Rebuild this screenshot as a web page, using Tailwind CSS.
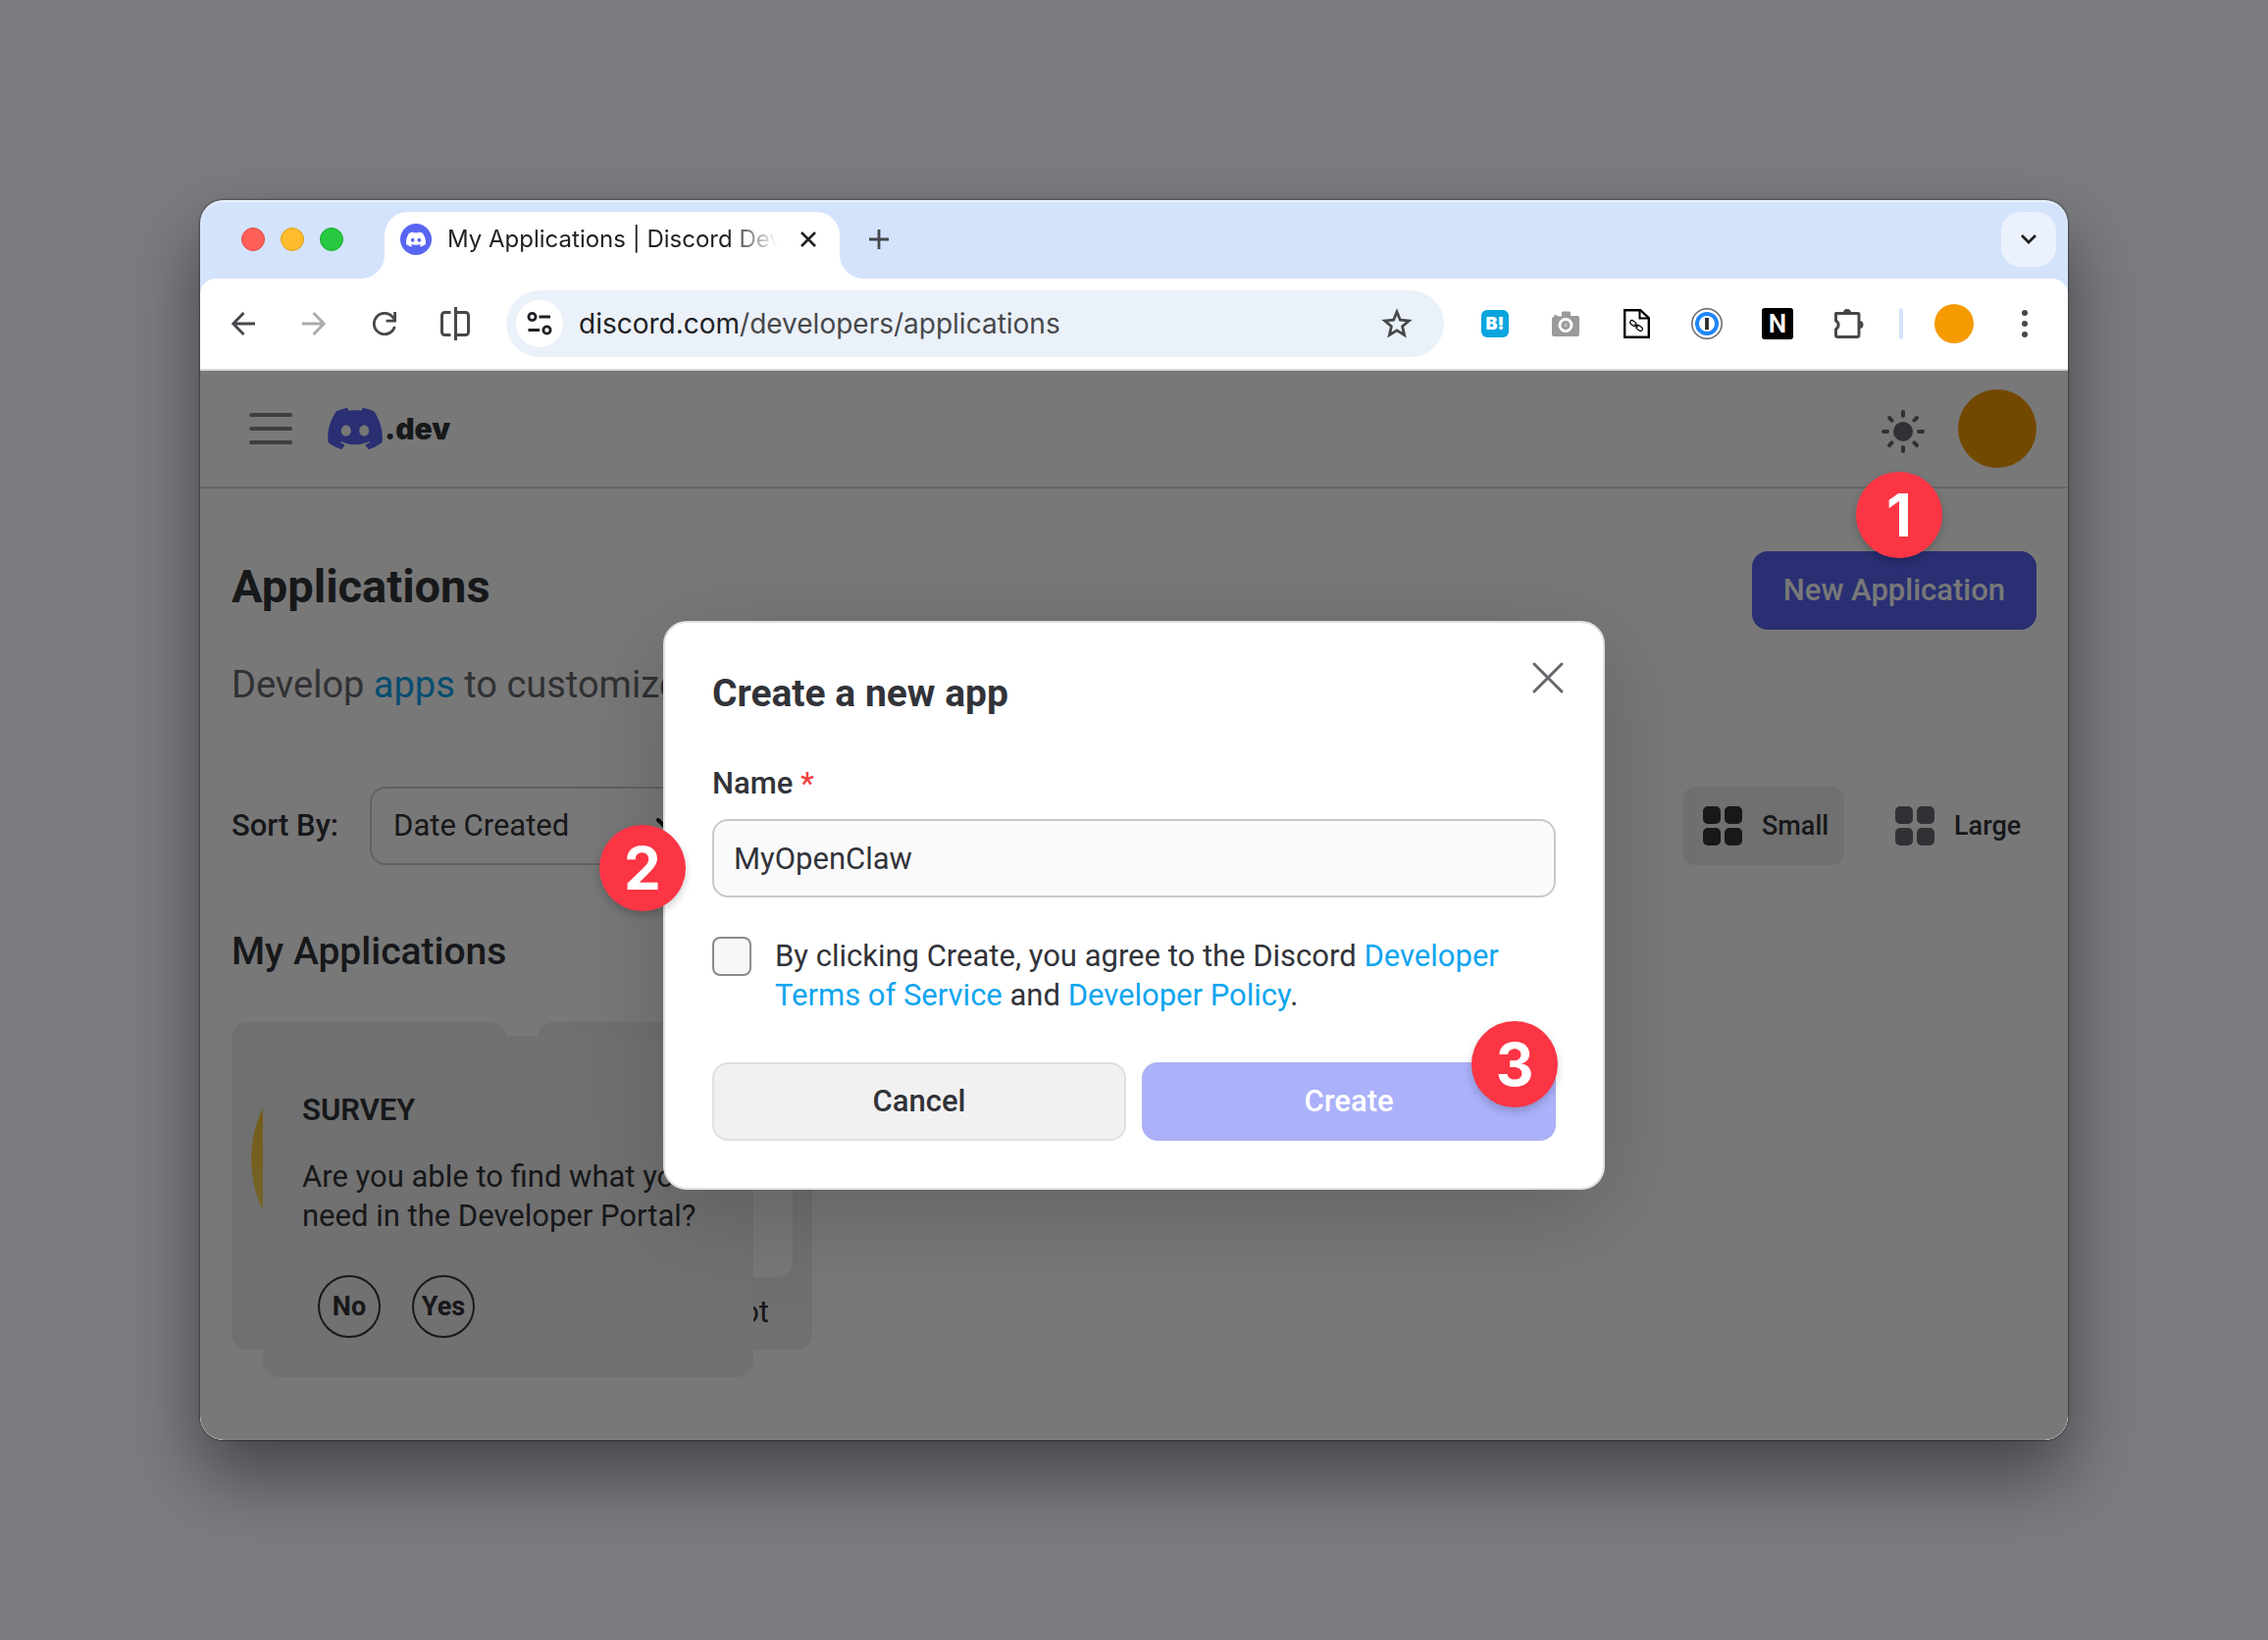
<!DOCTYPE html>
<html lang="en">
<head>
  <meta charset="UTF-8" />
  <title>My Applications | Discord Developer Portal</title>
  <meta name="viewport" content="width=device-width, initial-scale=1" />
  <script src="https://cdn.jsdelivr.net/npm/@tailwindcss/browser@4"></script>
</head>
<body class="min-h-screen bg-[#7b7c80] p-[204px] flex font-['Roboto','Noto_Sans',sans-serif] text-[31px] leading-[40px] text-[#323339]">

  <!-- Browser window -->
  <div class="relative flex-1 flex flex-col rounded-[24px] bg-[#d4e3fc] shadow-[0_0_2px_1px_rgba(0,0,0,0.35),0_36px_72px_rgba(0,0,0,0.45)]">

    <!-- Tab strip -->
    <div class="h-20 shrink-0 flex items-center pl-[42px] pr-3 font-['Inter',sans-serif] shadow-[inset_0_2px_1px_rgba(255,255,255,0.5)] rounded-t-[24px]">
      <div class="flex gap-4">
        <span class="size-6 rounded-full bg-[#ff5f57] border border-[#e2463f]"></span>
        <span class="size-6 rounded-full bg-[#febc2e] border border-[#e1a116]"></span>
        <span class="size-6 rounded-full bg-[#28c840] border border-[#12ac28]"></span>
      </div>

      <div class="relative self-end ml-[42px] w-[464px] h-[68px] flex items-center rounded-t-[24px] bg-white pl-4 pr-5 pb-3">
        <svg class="absolute -left-6 bottom-0 size-6" viewBox="0 0 24 24" fill="#fff"><path d="M24 0v24H0A24 24 0 0 0 24 0z" /></svg>
        <svg class="absolute -right-6 bottom-0 size-6" viewBox="0 0 24 24" fill="#fff"><path d="M0 0v24h24A24 24 0 0 1 0 0z" /></svg>
        <span class="size-8 shrink-0 rounded-full bg-[#5865f2] flex items-center justify-center">
          <svg class="w-5 h-4" viewBox="0 2.5 24 19" fill="#fff"><use href="#clyde" /></svg>
        </span>
        <span class="ml-4 w-[336px] overflow-hidden whitespace-nowrap text-[24px] leading-8 text-[#1f2023] mask-r-from-85% mask-r-to-100%">My Applications | Discord Developer Portal</span>
        <button type="button" aria-label="Close tab" class="ml-auto size-6 shrink-0 flex items-center justify-center">
          <svg class="size-4" viewBox="0 0 16 16" fill="none" stroke="#1f2023" stroke-width="2.6"><path d="M1 1l14 14M15 1L1 15" /></svg>
        </button>
      </div>

      <button type="button" aria-label="New tab" class="ml-7 size-6 flex items-center justify-center">
        <svg class="size-5" viewBox="0 0 20 20" fill="none" stroke="#44474b" stroke-width="2.8"><path d="M10 0v20M0 10h20" /></svg>
      </button>

      <button type="button" aria-label="Search tabs" class="ml-auto size-14 rounded-[20px] bg-[#ecf2fd] flex items-center justify-center">
        <svg class="w-4 h-[10px]" viewBox="0 0 16 10" fill="none" stroke="#1f2023" stroke-width="2.8"><path d="M1 1l7 7 7-7" /></svg>
      </button>
    </div>

    <!-- Toolbar -->
    <div class="h-[94px] shrink-0 flex items-center px-4 rounded-t-2xl bg-white border-b-2 border-[#d6d6d6]">
      <div class="flex gap-4">
        <button type="button" aria-label="Back" class="size-14 flex items-center justify-center">
          <svg class="size-6" viewBox="0 0 24 24" fill="none" stroke="#46484b" stroke-width="2.8"><path d="M24 12H2M12.500 1L1.800 12l10.700 11" /></svg>
        </button>
        <button type="button" aria-label="Forward" class="size-14 flex items-center justify-center">
          <svg class="size-6" viewBox="0 0 24 24" fill="none" stroke="#ababab" stroke-width="2.8"><path d="M0 12h22M11.500 1l10.700 11-10.700 11" /></svg>
        </button>
        <button type="button" aria-label="Reload" class="size-14 flex items-center justify-center">
          <svg class="size-6" viewBox="0 0 24 24" fill="none" stroke="#46484b" stroke-width="2.8"><path d="M22.300 15A10.700 10.700 0 1 1 20.500 5.500L22.500 8" /><path d="M22.600 0v9.200h-9" /></svg>
        </button>
        <button type="button" aria-label="Split view" class="size-14 flex items-center justify-center">
          <svg class="w-[30px] h-[34px]" viewBox="0 0 30 34" fill="none" stroke="#46484b" stroke-width="3"><path d="M10.500 5.500h-6a3 3 0 0 0-3 3v17a3 3 0 0 0 3 3h6M15.500 5.500h10a3 3 0 0 1 3 3v17a3 3 0 0 1-3 3h-10zM15.500 0v34" /></svg>
        </button>
      </div>

      <div class="ml-6 flex-1 h-[68px] flex items-center rounded-full bg-[#ebf1f9] pl-[10px] pr-8 font-['Inter',sans-serif]">
        <button type="button" aria-label="Site information" class="size-12 shrink-0 rounded-full bg-white flex items-center justify-center">
          <svg class="w-[26px] h-6" viewBox="0 0 26 24" fill="none" stroke="#1f2023" stroke-width="2.8"><circle cx="5.5" cy="5" r="3.6" /><path d="M12.500 5H24M1.500 18.500H13" /><circle cx="20.5" cy="18.5" r="3.6" /></svg>
        </button>
        <span class="ml-4 flex-1 text-[28px] text-[#46484b]"><span class="text-[#1f2023]">discord.com</span>/developers/applications</span>
        <button type="button" aria-label="Bookmark" class="size-8 flex items-center justify-center">
          <svg class="size-8" viewBox="0 0 32 32" fill="none" stroke="#46484b" stroke-width="2.8"><path d="M16 4l3.400 8.200 8.900.8-6.700 5.800 2 8.700-7.600-4.600-7.600 4.600 2-8.700L3.700 13l8.900-.8z" /></svg>
        </button>
      </div>

      <div class="ml-6 flex gap-4">
        <button type="button" aria-label="Hatena Bookmark" class="size-14 flex items-center justify-center">
          <span class="size-7 rounded-md bg-[#0ba5de] text-white text-[18px] leading-7 font-black font-['Inter',sans-serif]">B!</span>
        </button>
        <button type="button" aria-label="Capture" class="size-14 flex items-center justify-center">
          <svg class="size-7" viewBox="0 0 28 28"><path fill="#9a9a9a" d="M10 3q0-1.500 1.500-1.500h6q1.500 0 1.500 1.500v3h7q2 0 2 2v17q0 2-2 2H2q-2 0-2-2V9q0-2 2-2 0-2 1.800-2T6 6.500h4z" /><circle cx="14" cy="15.5" r="6" fill="#9a9a9a" stroke="#fff" stroke-width="3" /><circle cx="14" cy="15.5" r="2" fill="#bbb" /></svg>
        </button>
        <button type="button" aria-label="Copy link" class="size-14 flex items-center justify-center">
          <svg class="w-[27px] h-[30px]" viewBox="0 0 27 30" fill="none" stroke="#000"><path stroke-width="2.4" d="M1.200 1.200h16l8.600 8v19.600H1.200z" /><path stroke-width="2" d="M16.500 2v7.500H25" /><g stroke-width="1.2" transform="rotate(38 13 17)"><rect x="5.500" y="15" width="7" height="4" rx="2" /><rect x="13.500" y="15" width="7" height="4" rx="2" /><path d="M10.500 17h5" /></g></svg>
        </button>
        <button type="button" aria-label="1Password" class="size-14 flex items-center justify-center">
          <svg class="size-8" viewBox="0 0 32 32" fill="none"><circle cx="16" cy="16" r="15.2" stroke="#666" stroke-width="1.5" /><circle cx="16" cy="16" r="10" stroke="#1f86f7" stroke-width="4" /><path d="M16 10v12" stroke="#2b2b2b" stroke-width="3.8" /></svg>
        </button>
        <button type="button" aria-label="Notion" class="size-14 flex items-center justify-center">
          <span class="size-8 rounded-[3px] bg-black text-white text-[26px] leading-8 font-semibold">N</span>
        </button>
        <button type="button" aria-label="Extensions" class="size-14 flex items-center justify-center">
          <svg class="size-8" viewBox="0 0 32 32"><path fill="none" stroke="#46484b" stroke-width="3" stroke-linejoin="round" d="M3.500 5.500H26a1 1 0 0 1 1 1V28a1.500 1.500 0 0 1-1.500 1.500H5A1.500 1.500 0 0 1 3.500 28v-6.500a4.800 4.800 0 0 0 0-8.500V5.500z" /><path fill="#46484b" d="M11 5a4 4 0 0 1 8 0zM27.500 13a4 4 0 0 1 0 8z" /></svg>
        </button>
      </div>
      <span class="ml-6 w-1 h-8 rounded-full bg-[#d4e3fc]"></span>
      <button type="button" aria-label="Profile" class="ml-8 size-10 rounded-full bg-[#f59a00]"></button>
      <button type="button" aria-label="Browser menu" class="ml-6 size-14 flex items-center justify-center">
        <svg class="w-[6px] h-7" viewBox="0 0 6 28" fill="#46484b"><circle cx="3" cy="3" r="3" /><circle cx="3" cy="14" r="3" /><circle cx="3" cy="25" r="3" /></svg>
      </button>
    </div>

    <!-- Web page -->
    <div class="relative flex-1 flex flex-col overflow-hidden rounded-b-[24px] bg-white">
      <header class="h-[120px] shrink-0 flex items-center px-8 border-b-2 border-[#d9d9d9]">
        <button type="button" aria-label="Menu" class="w-20 h-20 flex items-center justify-center">
          <svg class="w-11 h-8" viewBox="0 0 44 32" stroke="#85868d" stroke-width="4" stroke-linecap="round"><path d="M2 2h40M2 16h40M2 30h40" /></svg>
        </button>
        <a href="#" class="ml-[18px] flex items-center gap-[2px] font-['Inter',sans-serif] font-black text-[30px] text-[#323339]">
          <svg class="w-14 h-11" viewBox="0 2.5 24 19" fill="#5865f2"><path id="clyde" d="M20.317 4.3698a19.7913 19.7913 0 00-4.8851-1.5152.0741.0741 0 00-.0785.0371c-.211.3753-.4447.8648-.6083 1.2495-1.8447-.2762-3.68-.2762-5.4868 0-.1636-.3933-.4058-.8742-.6177-1.2495a.077.077 0 00-.0785-.037 19.7363 19.7363 0 00-4.8852 1.515.0699.0699 0 00-.0321.0277C.5334 9.0458-.319 13.5799.0992 18.0578a.0824.0824 0 00.0312.0561c2.0528 1.5076 4.0413 2.4228 5.9929 3.0294a.0777.0777 0 00.0842-.0276c.4616-.6304.8731-1.2952 1.226-1.9942a.076.076 0 00-.0416-.1057c-.6528-.2476-1.2743-.5495-1.8722-.8923a.077.077 0 01-.0076-.1277c.1258-.0943.2517-.1923.3718-.2914a.0743.0743 0 01.0776-.0105c3.9278 1.7933 8.18 1.7933 12.0614 0a.0739.0739 0 01.0785.0095c.1202.099.246.1981.3728.2924a.077.077 0 01-.0066.1276 12.2986 12.2986 0 01-1.873.8914.0766.0766 0 00-.0407.1067c.3604.698.7719 1.3628 1.225 1.9932a.076.076 0 00.0842.0286c1.961-.6067 3.9495-1.5219 6.0023-3.0294a.077.077 0 00.0313-.0552c.5004-5.177-.8382-9.6739-3.5485-13.6604a.061.061 0 00-.0312-.0286zM8.02 15.3312c-1.1825 0-2.1569-1.0857-2.1569-2.419 0-1.3332.9555-2.4189 2.157-2.4189 1.2108 0 2.1757 1.0952 2.1568 2.419 0 1.3332-.9555 2.4189-2.1569 2.4189zm7.9748 0c-1.1825 0-2.1569-1.0857-2.1569-2.419 0-1.3332.9554-2.4189 2.1569-2.4189 1.2108 0 2.1757 1.0952 2.1568 2.419 0 1.3332-.946 2.4189-2.1568 2.4189Z" /></svg>
          <span>.dev</span>
        </a>
        <div class="ml-auto flex items-center gap-8">
          <button type="button" aria-label="Toggle theme" class="size-12 pt-[6px] flex items-center justify-center">
            <svg class="size-11 shrink-0" viewBox="0 0 44 44" stroke="#66686f" stroke-width="4" stroke-linecap="round"><circle cx="22" cy="22" r="10" fill="#66686f" stroke="none" /><path d="M22 2v4M22 38v4M2 22h4M38 22h4M8 8l2.600 2.600M33.400 33.400L36 36M8 36l2.600-2.600M33.400 10.600L36 8" /></svg>
          </button>
          <button type="button" aria-label="Account" class="size-20 rounded-full bg-[#f59a00]"></button>
        </div>
      </header>

      <main class="px-8 pt-16">
        <div class="flex justify-between items-start">
          <h1 class="text-[47px] leading-[72px] font-bold">Applications</h1>
          <button type="button" class="h-20 px-8 rounded-2xl bg-[#5865f2] text-white font-medium">New Application</button>
        </div>
        <p class="mt-8 text-[38px] leading-[48px] text-[#66686f]">Develop <a href="#" class="text-[#0ea5ef]">apps</a> to customize</p>

        <div class="mt-20 flex items-center">
          <label for="sort" class="font-medium">Sort By:</label>
          <div class="relative ml-8">
            <select id="sort" class="w-[348px] h-20 appearance-none rounded-2xl border-2 border-[#cfcfcf] px-[22px]">
              <option>Date Created</option>
            </select>
            <svg class="absolute right-8 top-8 w-6 h-4" viewBox="0 0 24 16" fill="none" stroke="#1f2023" stroke-width="4" stroke-linecap="round" stroke-linejoin="round"><path d="M2 2l10 10L22 2" /></svg>
          </div>
          <div class="ml-auto flex gap-8 text-[27px] font-medium">
            <button type="button" class="h-20 w-[164px] flex items-center gap-5 pl-5 rounded-xl bg-[#efefef]">
              <svg class="size-10 shrink-0" viewBox="0 0 40 40" fill="#323339"><rect width="18" height="18" rx="5" /><rect x="22" width="18" height="18" rx="5" /><rect y="22" width="18" height="18" rx="5" /><rect x="22" y="22" width="18" height="18" rx="5" /></svg>
              Small
            </button>
            <button type="button" class="h-20 w-[164px] flex items-center gap-5 pl-5 rounded-xl">
              <svg class="size-10 shrink-0" viewBox="0 0 40 40" fill="#66686f"><rect width="18" height="18" rx="5" /><rect x="22" width="18" height="18" rx="5" /><rect y="22" width="18" height="18" rx="5" /><rect x="22" y="22" width="18" height="18" rx="5" /></svg>
              Large
            </button>
          </div>
        </div>

        <h2 class="mt-16 text-[39px] leading-[48px] font-medium">My Applications</h2>
        <div class="mt-12 flex gap-8">
          <a href="#" class="w-[280px] h-[334px] p-5 rounded-2xl bg-[#efefef]">
            <span class="block size-60 rounded-full bg-linear-to-b from-[#f2b90f] to-[#ffdf6b]"></span>
          </a>
          <a href="#" class="w-[280px] h-[334px] p-5 rounded-2xl bg-[#efefef]">
            <span class="block size-60 rounded-2xl bg-white"></span>
            <span class="block mt-4 pr-6 text-right">ot</span>
          </a>
        </div>
      </main>

      <!-- Survey popup -->
      <section class="absolute left-16 bottom-16 w-[500px] px-10 pt-14 pb-10 rounded-2xl bg-[#f0f0f0]">
        <h3 class="font-semibold">SURVEY</h3>
        <p class="mt-7">Are you able to find what you need in the Developer Portal?</p>
        <div class="mt-10 ml-4 flex gap-8 text-[27px] font-bold">
          <button type="button" class="size-16 rounded-full border-2 border-[#323339]">No</button>
          <button type="button" class="size-16 rounded-full border-2 border-[#323339]">Yes</button>
        </div>
      </section>

      <!-- Backdrop and dialog -->
      <div class="absolute inset-0 flex items-center justify-center rounded-b-[24px] bg-black/53 shadow-[inset_0_-1px_1px_rgba(255,255,255,0.12)]">
        <span class="absolute top-[103px] right-32 size-22 rounded-full bg-[#fc3545] shadow-[0_4px_8px_rgba(0,0,0,0.2)] text-white text-center text-[60px] leading-[88px] font-bold font-['Inter',sans-serif]">1</span>

        <div role="dialog" aria-labelledby="dialog-title" class="relative w-[960px] p-12 rounded-[24px] border-2 border-[#e0e0e0] bg-white shadow-[0_24px_96px_rgba(0,0,0,0.18)]">
          <button type="button" aria-label="Close" class="absolute top-8 right-8 size-12 flex items-center justify-center">
            <svg class="size-8" viewBox="0 0 32 32" fill="none" stroke="#66676c" stroke-width="3" stroke-linecap="round"><path d="M2 2l28 28M30 2L2 30" /></svg>
          </button>
          <h2 id="dialog-title" class="text-[39px] leading-[48px] font-bold">Create a new app</h2>

          <form>
            <label for="app-name" class="block mt-12 font-medium">Name <span class="text-[#f23f43]">*</span></label>
            <div class="relative mt-4">
              <input id="app-name" type="text" value="MyOpenClaw" class="block w-full h-20 px-5 rounded-2xl border-2 border-[#c8c8c8] bg-[#fafafa]" />
              <span class="absolute top-[6px] -left-[115px] size-22 rounded-full bg-[#fc3545] shadow-[0_4px_8px_rgba(0,0,0,0.2)] text-white text-center text-[60px] leading-[88px] font-bold font-['Inter',sans-serif]">2</span>
            </div>

            <div class="mt-10 flex gap-6">
              <input id="agree" type="checkbox" class="size-10 shrink-0 appearance-none rounded-lg border-2 border-[#8a8b90] bg-[#f6f6f6]" />
              <label for="agree">By clicking Create, you agree to the Discord <a href="#" class="text-[#0ea5ef]">Developer Terms of Service</a> and <a href="#" class="text-[#0ea5ef]">Developer Policy</a>.</label>
            </div>

            <div class="mt-12 grid grid-cols-2 gap-4">
              <button type="button" class="h-20 rounded-2xl border-2 border-[#e0e0e0] bg-[#f1f1f1] font-medium">Cancel</button>
              <div class="relative">
                <button type="submit" class="w-full h-20 rounded-2xl border-2 border-[#adb0f2] bg-[#abb1fa] text-white font-medium">Create</button>
                <span class="absolute -top-[42px] -right-[2px] size-22 rounded-full bg-[#fc3545] shadow-[0_4px_8px_rgba(0,0,0,0.2)] text-white text-center text-[60px] leading-[88px] font-bold font-['Inter',sans-serif]">3</span>
              </div>
            </div>
          </form>
        </div>
      </div>
    </div>
  </div>
</body>
</html>
